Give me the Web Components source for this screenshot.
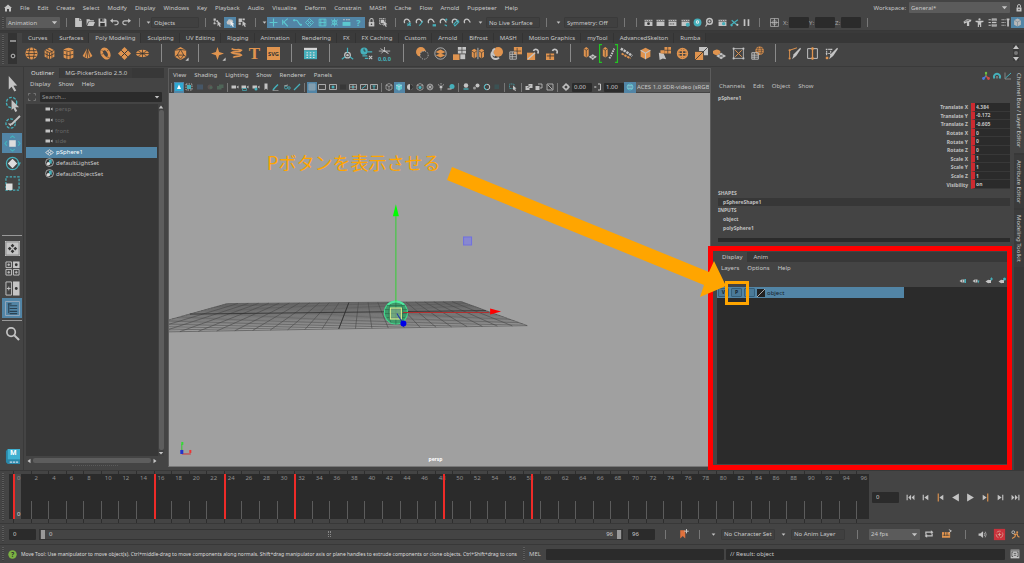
<!DOCTYPE html>
<html lang="en">
<head>
<meta charset="utf-8">
<title>Maya</title>
<style>
html,body{margin:0;height:100%;background:#444}
body{font:6px/8px "Noto Sans","Noto Sans CJK JP",sans-serif;color:#c8c8c8;overflow:hidden}
</style>
</head>
<body>
<maya-app></maya-app>
<script>
const G='#c4c4c4',O='#e0944f',T='#45b0bb',D='#333';
const s=(d,c=G,w=1.6,x='')=>`<path d="${d}" fill="none" stroke="${c}" stroke-width="${w}" ${x}/>`;
const f=(d,c=G)=>`<path d="${d}" fill="${c}"/>`;
const c=(x,y,r,k=G)=>`<circle cx="${x}" cy="${y}" r="${r}" fill="${k}"/>`;
const ring=(x,y,r,k=G,w=1.6,e='')=>`<circle cx="${x}" cy="${y}" r="${r}" fill="none" stroke="${k}" stroke-width="${w}" ${e}/>`;
const txt=(t,y,size,k,fam='Noto Sans')=>`<text x="8" y="${y}" text-anchor="middle" font-family="${fam}" font-weight="bold" font-size="${size}" fill="${k}">${t}</text>`;
const cursor='M8 5l7 6-3 .5 2 3.500-2 1-2-3.500-2 2z';
const magnet=(t,k=T)=>s('M3 9A4.500 4.500 0 1 1 11 5l2 3',G,2.4)+s(t,k,2);
const clap=x=>f('M1 3h14v3H1zM1 7h14v7H1z')+s('M3 3l2 3M7 3l2 3M11 3l2 3',D,1)+x;
const cam=f('M1 5h9v6H1zM11 8l4-3v6z');
const pen=f('M15 1L7 9l-2 6 5-4 6-9z');
const globe=ring(8,8,6,O,2)+s('M2 8h12M8 2v12M4 4.500h8M4 11.500h8',O,1.4)+s('M5 3C3 7 3 9 5 13M11 3c2 4 2 6 0 10',O,1.2);
const ball=c(8,8,7.500,O)+s('M1 8h14M2 4.500h12M2 11.500h12M6 1q-3 7 0 14M10 1q3 7 0 14',D,.9);
const cubeO=f('M8 1l6 3v8l-6 3-6-3V4z',O)+s('M2 4l6 3 6-3M8 7v8M5 2.500l6 3M5 5.500v8M11 5.500v8M2 8l6 3 6-3',D,.9);
const cubeS=f('M8 1l6 3v8l-6 3-6-3V4z',O)+s('M2 4l6 3.500L14 4M8 7.500V15',G,1.3);
const cyl=(x)=>f(`M${x} 2l3-2 3 2v9l-3 2-3-2z`,O)+s(`M${x} 2l3 2 3-2M${x+3} 4v8`,D,.8);
const plane=f('M7 12l5-3 5 3-5 4z')+s('M9.500 10.500l5 4M14.500 10.500l-5 4',D,.6);
const ICONS={
home:f('M8 1L0 8h2v7h4v-5h4v5h4V8h2z'),
lock:f('M3 7h10v8H3z')+s('M5 7V4a3 3 0 0 1 6 0v3',G,1.8)+c(8,11,1.4,D),
file:f('M2 0h7v5h5v11H2zM10 0l4 4h-4z'),
open:f('M1 2h5l2 2h6v2H4l-3 7zM5 7h11l-3 7H2z'),
save:f('M1 1h12l2 2v12H1z')+f('M4 1h7v5H4zM4 9h8v6H4z',D)+f('M8 2h2v3H8z'),
undo:s('M3 5h8a3.500 3.500 0 0 1 0 7H8',G,2)+f('M5 1v8L0 5z'),
redo:s('M13 5H5a3.500 3.500 0 0 0 0 7h3',G,2)+f('M11 1v8l5-4z'),
selh:f('M1 1h4v4H1zM1 8h3v3H1zM6 4h3v3H6z')+s('M3 5v5h3',G,1)+f(cursor),
selo:f('M1 7l4-5 6 1 2 3-6 6-5-1z')+f(cursor,'#eee'),
selc:f('M1 1h6v6H1zM8 1h4v3H8zM1 8h4v4H1z')+f(cursor),
m1:s('M8 1v14M1 8h14','#5cc8d0',2),
m2:s('M12 1L5 7l7 8M3 3v9','#5cc8d0',2),
m3:s('M1 4h5c4 0 3 9 9 8','#5cc8d0',2)+c(2,4,2,'#5cc8d0')+c(14,12,2,'#5cc8d0'),
m4:s('M8 1l7 7-7 7-7-7zM4.500 4.500l7 7M11.500 4.500l-7 7','#5cc8d0',1.6),
m5:s('M2 2h12v12H2zM5 2v12M11 2v12M2 8h12','#5cc8d0',1.6),
m6:s('M2 3l12 10M14 3L2 13M8 1v14','#5cc8d0',1.5)+ring(8,8,4,'#5cc8d0'),
m7:f('M1 7h14v7H1z','#5cc8d0')+s('M2 3h3M7 3h3M11 3h3',G,2),
m8:txt('?',14,16,'#5cc8d0'),
selbox:s('M1 1h10v10H1z',G,1.6,'stroke-dasharray="2 1"')+f('M3 3h6v6H3z')+f(cursor),
g1:magnet('M7 10l7 4M8 14l5-5M10 8l4 3'),g2:magnet('M7 13c4 0 3-4 7-8'),g3:magnet('M11 12h4v2h-4z'),g4:magnet('M11 3h4M13 1v4M10 12l4 2'),g5:magnet('M5 11l7-7 2 3-7 7z'),g6:magnet('M0 0'),
r1:clap(c(8,10,2.500,D)),r2:clap(''),r3:clap(s('M4 9v3M7 9v3M10 9v3',D,1)),r4:clap(c(12,12,3.500,T)),
r5:c(8,8,7,T)+c(8,7,3,'#eee')+c(8,7,1.4,T),
r6:ring(8,6,5,G,2.500)+c(8,6,2)+s('M4 10l-3 5',G,2),
r7:clap(c(10,10,3,T)),r8:s('M1 13L14 3M3 4l9 8',T,2)+c(3,13,2,T)+c(13,12,2,G),
pause:f('M3 2h3v12H3zM10 2h3v12h-3z'),
xf:s('M1 1h14v14H1zM8 1v14M1 8h14',G,1.2)+s('M5 5h6v6H5z',G,1),
w1:f('M1 6l6-4 8 1-1 3-3 1v7H7V8L2 10z')+s('M3 6l8-2',D,1),
w2:c(8,2.500,2)+f('M1 5h14v2l-4 1v8H9v-4H7v4H5V8L1 7z'),
w3:s('M1 3h4M1 8h4M1 13h4M7 3h8M7 8h8M7 13h8',G,1.8)+s('M7 1h8v4H7zM7 11h8v4H7z',G,1),
w4:s('M1 3h7M1 8h7M1 13h7',G,1.8,'stroke-dasharray="2 1"')+f('M10 1h5v3h-1v11h-3V4h-1z'),
w5:f('M8 1l6 3v8l-6 3-6-3V4z','#b9b9b9')+s('M2 4l6 3 6-3M8 7v8','#6a7f8c',1),
sph:ball,wheel:globe,cube:cubeO,
cyl:f('M2 3q6-4 12 0v10q-6 4-12 0z',O)+s('M2 4q6 3 12 0M2 9q6 3 12 0M6 6v9M10 6v9',D,.9),
cone:f('M8 1l6 10q-6 6-12 0z',O)+s('M8 1v13M8 2L5 13M8 2l3 11',D,.8),
tor:`<ellipse cx="8" cy="8" rx="4" ry="6" transform="rotate(-30 8 8)" fill="none" stroke="${O}" stroke-width="3.600"/>`+s('M3 4l3 2M9 12l4 1M3 9l3-1M10 5l2-2',D,.7),
pln:f('M8 0l8 8-8 8-8-8z',O)+s('M4 4l8 8M12 4l-8 8',D,1.2),
disc:`<ellipse cx="8" cy="8" rx="8" ry="4.500" fill="${O}"/>`+s('M0 8h16M8 3v10M3 5l10 6M13 5L3 11',D,.9),
plat:f('M8 0l7 4v8l-7 4-7-4V4z',O)+s('M8 3l4 7H4zM1 4l7-1 7 1M4 10l4 5 4-5M1 12l3-2M15 12l-3-2',D,.9)+f('M18 13v4h-4z'),
star:f('M8 0l2 6 6 2-6 2-2 6-2-6-6-2 6-2z',O)+f('M18 13v4h-4z'),
helix:s('M2 2c4 3 8 0 12 2-3 4-9 0-12 3 4 3 9 0 12 3-3 3-8 0-10 3',O,2),
tee:txt('T',15,21,O,'Liberation Serif'),
svg:f('M0 0h16v16H0z',O)+txt('SVG',11,7,D),
cal:f('M0 1h16v3H0z','#d5d5d5')+f('M0 4h16v11H0z',T)+s('M3 7h2M7 7h2M11 7h2M3 10h2M7 10h2M11 10h2M3 13h2M7 13h2M11 13h2','#ddd',1.3),
piv:ring(8,10,3.500,G,1.500)+c(8,10,1.5)+s('M8 7V1M5 12l-4 3M11 12l4 3',T,1.500),
clk:c(5,5,4.500,T)+s('M5 2v3h2',D,1)+s('M9 6h6M3 11h6M6 14h4',T,1.4)+s('M11 11l4 4M15 11l-4 4',G,1.4),
zero:s('M8 0v6M4 8l4-4 4 4M1 5h14M3 2l10 6',G,1)+txt('0,0,0',17,7,T),
b1:c(6,6,6,O)+`<circle cx="10" cy="10" r="5" fill="#444" stroke="${G}" stroke-width="1" stroke-dasharray="1.500 1.500"/>`,
b2:ring(8,8,7,G,1)+f('M2 6l6-3 6 3-6 3zM2 10l6-2 6 2-6 3z',O),
b3:f('M6 0h10v8H6z')+f('M0 9h8v7H0z',O)+f('M9 9h6v6H9z')+s('M11 0v8M6 4h10',D,.8),
b4:f('M1 4l3-2 3 2v8l-3 2-3-2zM10 4l3-2 3 2v8l-3 2-3-2z',O)+s('M8.500 1v14',G,1)+s('M1 5l3 2 3-2M4 7v7M10 5l3 2 3-2M13 7v7',D,.8),
b5:c(10,6,6,O)+s('M6 2a5 5 0 0 0 0 9M3 6a5 5 0 0 0 8 7',G,2.4),
b6:f('M6 0h10v9H6z',O)+s('M1 6h8v9H1zM4 6v9M1 9h8M1 12h8',G,1)+s('M10 1v8M6 5h9',D,.8),
b7:f('M0 7h10v9H0z',O)+s('M1 15l9-8',G,1.500)+s('M8 5a3 3 0 1 1 5 3',G,2),
b8:f('M0 8h10v8H0z',O)+s('M5 8v7M1 11h9',D,1)+s('M8 5a3 3 0 1 1 5 3',G,2),
c1:cyl(1)+plane,
c2:cyl(1)+s('M9 14l3-5 3-7',G,2.400,'stroke-dasharray="2 1"')+s('M0-3h-3v22h3M16-3h3v22h-3','#22c522',1.500),
c3:s('M1 2l5 3 5 3 4 3',G,3,'stroke-dasharray="3 1"')+s('M2 8l5 3 6 3',O,2.4,'stroke-dasharray="3 1"'),
c4:cubeS,c5:f('M8 0h8v8H8z',O)+f('M1 7l6 1 3 7-4-1-4 2z')+f('M3 4h5v4H3z',O)+s('M12 0v8M8 4h8',D,.8),
c7:f('M0 6h10v10H0z',O)+f('M5 0h11v10h-5V5H5z')+s('M0 16L10 6M10 6l6-6',D,1),
c8:f('M0 5q5-4 9 0v3q-4 4-9 0z',O)+f('M4 11l6-4 6 4-6 4z')+s('M7 9l6 4M13 9l-6 4',D,.7),
c9:s('M2 2h12v12H2z',G,1)+s('M4 4l8 8M12 4l-8 8',O,1.2)+[[2,2],[14,2],[2,14],[14,14]].map(p=>c(p[0],p[1],1.3)).join(''),
c10:`<g transform="translate(5 -1) scale(.7)">${ball}</g>`+s('M1 7h8v8H1zM4 7v8M1 10h8M1 12.500h8',G,1.1),
d1:s('M2 13V4l9-3',O,1.2)+pen+c(2,4,1.3,O)+c(2,14,1.3,O),
d2:s('M2 2h12v12H2z',G,1.200)+s('M8 1v14',O,1.6)+c(8,2,1.6,O)+c(8,14,1.6,O),
d3:s('M1 3h9M1 8h6M2 2v8M7 2v8',G,1.4,'stroke-dasharray="2 1"')+pen+f('M1 12h3v3H1z',O),
arrow:f('M4 0l9 10-4 .5 3 5-2 1-3-5-3 3z'),
lasso:ring(7,7,5.500,T,1.400,'stroke-dasharray="3 1.500"')+f('M7 4l8 8-4 0 2 4-2 1-2-4-2 2z'),
paint:ring(6,8,5,T,1.400,'stroke-dasharray="3 1.500"')+s('M16 0L7 9',G,2)+f('M8 8l-5 0 3 3z'),
move:f('M4.500 4.500h7v7h-7z','#ddd')+s('M5.500 2L8 0l2.500 2M5.500 14L8 16l2.500-2M2 5.500L0 8l2 2.500M14 5.500L16 8l-2 2.500',T,1.3),
rot:ring(8,8,6.500,T,1.300)+f('M8 3l5 5-5 5-5-5z','#ddd')+f('M13 7h4l-2 4z',T),
scale:s('M1 1h14v14H1z',T,1.3,'stroke-dasharray="2.500 1.500"')+f('M1 8h7v7H1z','#ddd'),
l1:f('M0 0h16v16H0z')+s('M1 1h14v14H1z','#888',1)+f('M8 3l2 2-2 2-2-2zM8 9l2 2-2 2-2-2zM5 6l2 2-2 2-2-2zM11 6l2 2-2 2-2-2z',D),
l2:s('M1 1h6v6H1zM9 9h6v6H9zM1 9h6v6H1zM4 2.500v3M2.500 4h3M4 10.500v3M2.500 12h3M12 10.500v3M10.500 12h3',G,1)+f('M8.500.5h7v7h-7z')+c(12,4,1.5,D),
l3:s('M1 1h6v14H1zM4 6v4M2 8h4',G,1)+f('M8.500.5h7v15h-7z')+c(12,8,1.5,D),
l4:s('M.5.5h15v15H.5z','#9ab',1)+s('M3 3h4M5 5h8M5 8h8M5 11h8M5 13.500h8M4 3v10','#2a4152',1.2),
search:ring(6.500,6.500,4.500,G,1.800)+s('M10 10l5 5',G,2.200),
maya:f('M1 2l2-2h13v16H3l-2-2z','#2a87a8')+f('M3 0h13v11H3z','#3fb0d0')+s('M5 14h9','#cde',1.500,'stroke-dasharray="2.500 .8"'),
cam:cam,mesh:s('M8 3l7 5-7 5-7-5zM4.500 5.500l7 5M11.500 5.500l-7 5','#ddd',1.5),
set:ring(8,8,7,G,1.400)+f('M7 3h5v7H7z',T)+c(6,10,3,'#ddd'),
sel4:s('M1 5V1h4M11 1h4v4M15 11v4h-4M5 15H1v-4','#888',1.4),
v1:f('M0 0h16v16H0z','#2fa9d2')+f('M8 3l4 9H4z','#fff'),
v2:s('M2 2h12v12H2z',G,1.6,'stroke-dasharray="3 2"')+f('M4 4h8v8H4z',T),
v3:f('M2 3h12v10H2z','#465666'),v4:c(8,8,5,'#59504f')+c(10,9,3,'#4f6558'),v5:f('M2 6h9v7H2zM6 3h9v7H6z','#4f6558'),
v6:cam,v7:cam+s('M3 11h8v4H3z',T,1.4),v8:cam+c(8,12,3,T),v9:f('M5 1h6v13l-3-3-3 3z'),
v10:s('M2 14l4-5 6-6',T,3)+s('M1 15h12',G,1),v11:ring(6,9,3,T)+ring(12,10,2.500,T)+s('M2 6l8-2',G,1.400),v12:s('M2 14L14 2',T,2.600),
v13:s('M2 2h12v12H2zM6 2v12M10 2v12M2 6h12M2 10h12','#bbb',1.1),
v14:s('M1 3h14v10H1z',G,1.6),v15:s('M1 3h14v10H1z',G,1.600)+c(8,8,3,T),v16:f('M2 3h12v10H2z','#383838'),
v17:s('M1 3h14v10H1zM1 8h14M8 3v10',G,1.4)+c(8,8,2,T),v18:s('M1 3h14v10H1z',G,1.6)+s('M4 11l8-6',T,2),v19:s('M1 3h14v10H1z',G,1.6)+s('M5 6h6M8 6v6',T,2),
v20:s('M8 1l6 3v8l-6 3-6-3V4zM2 4l6 3 6-3M8 7v8',G,1.2),v21:f('M8 1l6 3v8l-6 3-6-3V4z','#5cc8d0')+s('M2 4l6 3 6-3M8 7v8','#dde',1.2),
v22:c(8,8,6)+f('M8 2a6 6 0 0 1 0 12z',D),v23:s('M8 1l6 3v8l-6 3-6-3V4zM2 4l6 3 6-3',G,1.200)+c(8,9,3,T),
v24:ring(8,8,6,G,1.2)+s('M4 4l8 8M12 4l-8 8M8 2v12M2 8h12',G,1.2),
v25:c(8,8,3)+s('M8 0v3M2 3l3 2M14 3l-3 2M8 11v4',G,1.400),v26:c(10,7,5,T)+s('M1 12h8',G,2),
v27:c(8,5,4.500)+s('M3 12h10',T,2.600),v28:c(11,5,4)+c(5,10,3,'#999'),v29:ring(8,8,5.500,G,2)+s('M8 2.500a5.500 5.500 0 0 0 0 11',T,2),v30:f('M3 3h9v9H3z','#3b5254'),
v31:s('M1 2h9v9H1z',T,1.300,'stroke-dasharray="2 1"')+f(cursor),
v32:f('M1 6h8v8H1zM7 2h8v8H7z')+s('M5 10l5-5',D,1.500),v33:f('M1 6h8v8H1z')+s('M6 2h8v8h-4',G,1.6),v34:s('M2 2h12v12H2zM4 4l8 8',G,1.600),
gear:ring(8,8,4.500,G,3)+s('M8 0v3M8 13v3M0 8h3M13 8h3',G,2),gam:f('M1 6l5 2-5 2z')+s('M8 2h5v12H8',G,2),
ocio:ring(8,8,6,'#5cc8d0',1.6)+s('M3 5h10M2 8h12M3 11h10','#8ccbd4',1.500),
h1:s('M8 8V2','#6fc244',2.400)+s('M8 8L3 13','#4a7be0',2.400)+s('M8 8l5 5','#d34b44',2.400)+c(8,2,2.400,'#6fc244')+c(3,13,2.800,'#4a7be0')+c(13,13,2.800,'#d34b44'),
h2:s('M3 13A6 6 0 1 1 13 13',T,3.800)+s('M8 8v5',G,1.600),h3:s('M2 1v13h12',G,1)+s('M3 12L14 2',T,2),
k1:f('M1 8l6-4v8zM8 5h3v6H8z')+f('M11 4h3v8h-3z',T),k2:f('M1 8l6-4v8zM8 5h3v6H8z')+f('M11 7h4l-2 6z',T),k3:f('M1 9l6-4v8zM7 6h5v6H7z')+s('M13 1v6M10 4h6',T,2),k4:f('M1 9l6-4v8zM7 6h5v6H7z')+c(13,4,3,T),
p1:f('M1 3h2v10H1zM9 3v10L4 8zM15 3v10l-5-5z'),p2:f('M3 3h2v10H3zM13 3v10L6 8z'),p3:f('M3 1h2v14H3z',O)+f('M13 3v10L6 8z'),p4:f('M14 1v14L2 8z'),p5:f('M2 1v14l12-7z'),p6:f('M11 1h2v14h-2z',O)+f('M3 3v10l7-5z'),p7:f('M11 3h2v10h-2zM3 3v10l7-5z'),p8:f('M13 3h2v10h-2zM7 3v10l5-5zM1 3v10l5-5z'),
bm:f('M2 2h8v13l-4-4-4 4z','#e0713c')+s('M12 0v7M8.500 3.500h7',G,1.6),
loop:s('M3 9V5h10M13 7v4H3',G,1.900)+f('M11 2l4 3-4 3zM5 8l-4 3 4 3z'),
cache:f('M0 5h13v9H0z',O)+s('M1 10h11M4 5v6M8 5v6',D,1)+s('M11 1l4 2-4 3',G,1.500),
snd:f('M1 6h3l5-4v12l-5-4H1z')+s('M11 5q2 3 0 6M13 3q3 5 0 10',G,1.200),
auto:f('M-2-2h20v20H-2z','#c8323c')+ring(8,8,6,'#d9a090',1.400,'stroke-dasharray="8 3"')+s('M8 5v6M5 8h6','#d9a090',1.500),
run:ring(4,4,2.500,G)+c(11,4,1.800,O)+s('M5 8l6-1 1 4 3 2M8 8l-1 4-5 3',O,2),
help:c(8,8,7.500,'#7cb342')+txt('?',12.5,12,D),
script:f('M1 1h14v14H1z')+s('M5 5H3v7h2M11 5h2v7h-2M6 7h4M6 10h4M1 3h14',D,1.1),
dash:s('M0 8h16','#aaa',4),gearS:ring(8,8,5,G,2.500),
up:f('M8 4l6 8H2z'),down:f('M2 5h12l-6 7z'),left:f('M12 2v12L4 8z'),right:f('M4 2v12l8-6z'),
spin:f('M8 0l3 4H5zM8 16l3-4H5z')+c(8,8,2,'#777')
};
const base=`*{box-sizing:border-box}:host{display:block;min-width:0}
button{all:unset;display:grid;place-items:center;box-sizing:border-box}
input,select{font:inherit;color:inherit;border:0;margin:0;padding:0 4px;background:#2b2b2b;border-radius:1px;min-width:0;appearance:none;outline:0;height:11px}
select{background:#5b5b5b;padding:0 2px}a{color:inherit;text-decoration:none}
.row{display:flex;align-items:center}.grow{flex:1}nav{display:flex;gap:8px;white-space:nowrap}
.w6{width:6px}.w12{width:12px}.w20{width:20px}.w27{width:27px}.w54{width:54px}.pick{position:relative;display:flex}.pick select{width:100%}.pick ma-icon{position:absolute;right:2px;top:2px;--s:7px}`;
function define(tag,css,html,setup){
  customElements.define(tag,class extends HTMLElement{
    connectedCallback(){
      if(this.shadowRoot)return;
      const t=document.createElement('template');
      t.innerHTML=`<style>${base}${css}</style>${typeof html==='function'?html(this):html}`;
      this.attachShadow({mode:'open'}).append(t.content.cloneNode(true));
      if(setup)setup(this,this.shadowRoot);
    }
  });
}
define('ma-icon',`:host{display:block;width:var(--s,10px);height:var(--s,10px);flex:none}svg{display:block;overflow:visible}`,
  e=>`<svg viewBox="0 0 16 16" width="100%" height="100%" aria-hidden="true">${ICONS[e.getAttribute('name')]||''}</svg>`);
/* A run of tool buttons sharing one width; "*" marks an active tool, "|" a divider. */
define('ma-strip',`:host{flex:none;align-self:stretch}div{display:flex;align-items:center;height:100%}
button{flex:1 1 0;min-width:0;height:100%;max-height:var(--cell,11px)}.on{background:#5285a6}i{flex:1 1 0;display:grid;place-items:center}i::after{content:"";width:1px;height:var(--bar,18px);background:#8a8a8a}`,
  e=>`<div>${e.getAttribute('items').split(' ').map(n=>n==='|'?'<i></i>':`<button class="${n.endsWith('*')?'on':''}" aria-label="${n.replace('*','')}"><ma-icon name="${n.replace('*','')}"></ma-icon></button>`).join('')}</div>`);
define('ma-sep',`:host{display:grid;place-items:center;width:12px;flex:none}i{width:1px;height:9px;background:#777}`,'<i></i>');
define('ma-grip',`:host{width:6px;flex:none;align-self:stretch;padding:2px}i{display:block;height:100%;width:2px;background:repeating-linear-gradient(#5c5c5c 0 1px,#3c3c3c 1px 2px)}`,'<i></i>');
const menu=a=>`<nav>${a.split(',').map(x=>`<a href="#">${x}</a>`).join('')}</nav>`;
const pick=(w,l,v)=>`<span class="pick" style="width:${w}px"><select aria-label="${l}"><option>${v}</option></select><ma-icon name="down"></ma-icon></span>`;

define('ma-menubar',`:host{height:15px}.row{height:100%;padding:0 1px 0 4px;gap:8px}ma-icon{--s:8px}label{margin-right:-5px}.pick{margin-right:-3px}`,
`<div class="row"><ma-icon name="home"></ma-icon>${menu('File,Edit,Create,Select,Modify,Display,Windows,Key,Playback,Audio,Visualize,Deform,Constrain,MASH,Cache,Flow,Arnold,Puppeteer,Help')}<span class="grow"></span><label>Workspace:</label>${pick(101,'Workspace','General*')}<ma-icon name="lock"></ma-icon></div>`);
define('ma-status',`:host{height:16px;border-bottom:1px solid #383838}.row{height:15px}.row ma-icon{--s:5px}.pick ma-icon{--s:7px}ma-strip{--s:9px}input.v{background:#404040;border:1px solid #3a3a3a;padding:0 0 0 2px}.ar{display:grid;place-items:center;flex:none}.xyz{text-align:right;padding-right:1px;color:#aaa}label{flex:none}input,.pick{flex:none}`,
`<div class="row"><ma-grip></ma-grip>${pick(54,'Menu set','Animation')}<ma-sep></ma-sep><ma-strip items="file open save undo redo" style="width:61px"></ma-strip><ma-sep></ma-sep><span class="ar w6"><ma-icon name="down"></ma-icon></span>
<input class="v" style="width:48px" value="Objects" aria-label="Selection mask"><ma-sep></ma-sep><ma-strip items="selh selo* selc" style="width:38px"></ma-strip><ma-sep></ma-sep><span class="ar w6"><ma-icon name="down"></ma-icon></span>
<ma-strip items="m1* m2* m3* m4* m5* m6* m7* m8*" style="width:98px"></ma-strip><ma-strip items="lock selbox" style="width:24px"></ma-strip><ma-sep></ma-sep><ma-strip items="g1 g2 g3 g4 g5 g6" style="width:73px"></ma-strip><span class="ar w12"><ma-icon name="down"></ma-icon></span>
<input class="v w54" value="No Live Surface" aria-label="Live surface"><ma-sep></ma-sep><span class="ar w12"><ma-icon name="down"></ma-icon></span><input class="v w54" value="Symmetry: Off" aria-label="Symmetry"><ma-sep></ma-sep><ma-sep></ma-sep>
<ma-strip items="r1 r2 r3 r4 r5 r6 r7 r8 pause" style="width:111px"></ma-strip><ma-sep></ma-sep><ma-strip items="xf" style="width:18px"></ma-strip>
<label class="xyz w6" for="x">X:</label><input id="x" class="w20"><label class="xyz w6" for="y">Y:</label><input id="y" class="w20"><label class="xyz w6" for="z">Z:</label><input id="z" class="w20"><ma-sep></ma-sep><span class="grow"></span><ma-strip items="w1 w2 w3 w4 w5*" style="width:63px"></ma-strip></div>`);
define('ma-shelf',`:host{height:34px;background:#444;border-bottom:1px solid #3a3a3a;display:flex}
.side{width:9px;background:#333;display:flex;flex-direction:column;justify-content:space-around;align-items:center;margin:0 5px 2px 2px;--s:6px}.main{flex:1;min-width:0}
.tabs{display:flex;height:10px;background:#373737}.tabs button{padding:0 6px;box-shadow:inset -1px 0 #333;background:#3b3b3b;white-space:nowrap}.tabs .on{background:#444}
.body{display:flex;height:20px;justify-content:space-between;--s:13px;--cell:18px;align-items:center}.body>ma-strip{width:819px}.spin{width:16px;--s:16px;background:linear-gradient(#393939,#393939) center/6px no-repeat}`,
`<ma-grip></ma-grip><div class="side"><ma-icon name="dash"></ma-icon><ma-icon name="gearS"></ma-icon></div><div class="main"><div class="tabs" role="tablist">${'Curves,Surfaces,Poly Modeling,Sculpting,UV Editing,Rigging,Animation,Rendering,FX,FX Caching,Custom,Arnold,Bifrost,MASH,Motion Graphics,myTool,AdvancedSkelton,Rumba'.split(',').map((t,i)=>`<button role="tab" class="${i===2?'on':''}">${t}</button>`).join('')}</div>
<div class="body"><ma-strip items="sph cube cyl cone tor pln disc | plat | star helix tee svg | cal | piv clk zero | b1 b2 b3 b4 b5 b6 b7 b8 | c1 c2 c3 c4 c5 wheel c7 c8 c9 c10 | d1 d2 d3"></ma-strip><button class="spin" aria-label="Scroll shelf"><ma-icon name="spin"></ma-icon></button></div></div>`);
define('ma-toolbox',`:host{width:24px;flex:none;padding:6px 2px 4px;display:flex;flex-direction:column;border-right:1px solid #3a3a3a;--s:15px}button{height:20px;width:20px;flex:none}.on{background:#5285a6}hr{border:0;height:1px;width:20px;background:#999;margin:2px 0;flex:none}.gap{height:40px}.m{position:relative;font:bold 7px/7px "Noto Sans",sans-serif;color:#fff}.m span{position:absolute;top:3px;left:8px}`,
`${['arrow','lasso','paint','move*','rot','scale'].map(n=>`<button class="${n.endsWith('*')?'on':''}" aria-label="${n}"><ma-icon name="${n.replace('*','')}"></ma-icon></button>`).join('')}<div class="gap"></div><hr>${['l1','l2','l3','l4*'].map(n=>`<button class="${n.endsWith('*')?'on':''}" aria-label="${n}"><ma-icon name="${n.replace('*','')}"></ma-icon></button>`).join('')}<hr><button aria-label="Search"><ma-icon name="search"></ma-icon></button><span class="grow"></span><button class="m" aria-label="Maya"><ma-icon name="maya"></ma-icon><span>M</span></button>`);
const rows=[['cam','persp','dim'],['cam','top','dim'],['cam','front','dim'],['cam','side','dim'],['mesh','pSphere1','on'],['set','defaultLightSet',''],['set','defaultObjectSet','']];
define('ma-outliner',`:host{width:138px;flex:none;display:flex;flex-direction:column;margin:1px 4px 0 2px}
.tabs{display:flex;gap:1px;height:10px;background:#383838}.tabs button{padding:0 5px;background:#3b3b3b}.tabs .on{background:#444;color:#ddd}
nav{padding:2px 4px;height:13px}.find{gap:4px;padding:0 2px;height:12px;--s:8px}.find span{flex:1;position:relative}.find input{width:100%;display:block;height:10px;padding:0 2px}.find input::placeholder{color:#999}.find span ma-icon{position:absolute;right:2px;top:2px;--s:6px}
.mid{flex:1;display:flex;background:#373737;margin-top:1px}ul{margin:0;padding:0;list-style:none;flex:1;display:grid;grid-template-rows:repeat(7,1fr);height:75px}li{display:flex;align-items:center;gap:2px;padding-left:19px;--s:9px}.dim{color:#666}.dim ma-icon{--s:8px}.on{background:#5285a6;color:#fff}
.vs{width:6px;margin-left:1px;display:flex;flex-direction:column;align-items:center;--s:6px;background:#404040}.vs b{flex:1;width:5px;background:#5d5d5d;border-radius:2px}
.hs{height:9px;display:flex;align-items:center;gap:1px;padding-right:6px;--s:6px}.hs b{flex:1;height:5px;background:#5d5d5d;border-radius:2px}.dots{height:5px;width:46px;margin:0 auto;border-top:1px dotted #5a5a5a}`,
`<div class="tabs" role="tablist"><button class="on" role="tab">Outliner</button><button role="tab">MG-PickerStudio 2.5.0</button></div>${menu('Display,Show,Help')}<div class="find row"><ma-icon name="sel4"></ma-icon><span><input placeholder="Search..." aria-label="Search"><ma-icon name="down"></ma-icon></span></div>
<div class="mid"><ul>${rows.map(r=>`<li class="${r[2]}"><ma-icon name="${r[0]}"></ma-icon>${r[1]}</li>`).join('')}</ul><div class="vs"><ma-icon name="up"></ma-icon><b></b><ma-icon name="down"></ma-icon></div></div><div class="hs"><ma-icon name="left"></ma-icon><b></b><ma-icon name="right"></ma-icon></div><div class="dots"></div>`);
/* Ground grid: a unit square of 24 divisions mapped on its four projected corners. */
function grid(){
  const [p0,p1,p2,p3]=[[228,303],[461,301],[527,325],[124,332]];
  const dx1=p1[0]-p2[0],dx2=p3[0]-p2[0],dx3=p0[0]-p1[0]+p2[0]-p3[0],dy1=p1[1]-p2[1],dy2=p3[1]-p2[1],dy3=p0[1]-p1[1]+p2[1]-p3[1];
  const k=dx1*dy2-dx2*dy1,g=(dx3*dy2-dx2*dy3)/k,h=(dx1*dy3-dx3*dy1)/k;
  const at=(u,v)=>{const w=g*u+h*v+1;return [((p1[0]-p0[0]+g*p1[0])*u+(p3[0]-p0[0]+h*p3[0])*v+p0[0])/w,((p1[1]-p0[1]+g*p1[1])*u+(p3[1]-p0[1]+h*p3[1])*v+p0[1])/w].map(n=>n.toFixed(1)).join(' ')};
  let d='';for(let i=0;i<=24;i++)d+=`M${at(i/24,0)}L${at(i/24,1)}M${at(0,i/24)}L${at(1,i/24)}`;
  return `<path d="${d}" fill="none" stroke="#484848" stroke-width=".6"/><path d="M${at(.5,0)}L${at(.5,1)}M${at(0,.5)}L${at(1,.5)}" fill="none" stroke="#303030" stroke-width=".8"/>`;
}
define('ma-viewport',`:host{flex:1;display:flex;flex-direction:column;border:1px solid #5c5c5c;border-bottom-color:#777;margin:1px 0 3px;position:relative;overflow:hidden}
nav{padding:2px 4px 0;height:12px}.tools{height:12px;--s:8px}.tools ma-sep{width:5px}.tools input{padding:0 2px;height:9px;flex:none}.tools .pick{flex:1}.tools select{height:10px;padding:0 1px;text-overflow:clip}
.scene{flex:1;min-height:0;background:#a0a0a0;position:relative}svg{width:100%;height:100%;display:block;position:absolute}.cam{position:absolute;bottom:3px;left:0;width:100%;text-align:center;color:#fff;font-weight:bold;font-size:5px;padding-right:8px}
.note{position:absolute;left:98px;top:56px;font:400 18px/26px "Noto Sans CJK JP",sans-serif;color:#ffa500;white-space:nowrap}`,
`${menu('View,Shading,Lighting,Show,Renderer,Panels')}<div class="tools row"><ma-sep></ma-sep><ma-strip items="v1* v2 v3 v4 v5" style="width:51px"></ma-strip><ma-sep></ma-sep><ma-strip items="v6 v7 v8 v9 v10 v11 v12" style="width:72px"></ma-strip><ma-sep></ma-sep><ma-strip items="v13* v14 v15 v16 v17 v18 v19" style="width:72px"></ma-strip><ma-sep></ma-sep><ma-strip items="v20 v21* v22 v23 v24 v25 v26" style="width:72px"></ma-strip><ma-sep></ma-sep><ma-strip items="v27 v28 v29 v30" style="width:41px"></ma-strip><ma-sep></ma-sep><ma-strip items="v31" style="width:12px"></ma-strip><ma-sep></ma-sep><ma-strip items="v32 v33 v34" style="width:31px"></ma-strip><ma-sep></ma-sep><ma-strip items="gear" style="width:12px"></ma-strip><input class="w20" value="0.00" aria-label="Exposure"><ma-strip items="gam" style="width:12px"></ma-strip><input class="w20" value="1.00" aria-label="Gamma"><ma-strip items="ocio*" style="width:12px"></ma-strip><span class="pick"><select aria-label="View transform"><option>ACES 1.0 SDR-video (sRGB)</option></select></span></div>
<div class="scene"><svg viewBox="169 93 541 372" preserveAspectRatio="xMidYMid slice">${grid()}
<circle cx="396" cy="312" r="11.500" fill="#3f9b6b" stroke="#3fe090"/><path d="M385 309h22M385 313h22M387 317h18M387 305h18M396 301v23M391 302q-4 10 0 20M401 302q4 10 0 20" fill="none" stroke="#2c6b4c" stroke-width=".7"/><path d="M388 304q8-6 16 0" stroke="#4fe8a0" fill="none" stroke-width="2"/>
<path d="M396 301V216" stroke="#35cf35"/><path d="M396 204l-3 12h6z" fill="#0f0"/><path d="M403 312h86" stroke="#b03030"/><path d="M501 311l-11-3v6z" fill="#f00"/><path d="M390.500 307.500h11v11h-11z" fill="#8fae8a" fill-opacity=".6" stroke="#e2ef8f"/><path d="M397 313l5 8" stroke="#23a"/><circle cx="403.500" cy="323" r="3" fill="#0000e8"/>
<path d="M463.500 236.500h8v8h-8z" fill="#8888d0" stroke="#7070e0"/><path d="M182.500 453v-10" stroke="#3c3"/><path d="M182.500 453h9" stroke="#c33"/><path d="M181 449h3v4h-3z" fill="#23c"/><path d="M190 449h2v3h-2z" fill="#e33"/><path d="M182 441h2v3h-2z" fill="#3d3"/></svg><span class="cam">persp</span><span class="note">Pボタンを表示させる</span></div>`);
const attrs=[['Translate X','4.384'],['Translate Y','-0.172'],['Translate Z','-0.605'],['Rotate X','0'],['Rotate Y','0'],['Rotate Z','0'],['Scale X','1'],['Scale Y','1'],['Scale Z','1'],['Visibility','on']];
define('ma-channels',`:host{padding:4px 4px 0 7px;height:177px;display:flex;flex-direction:column;font-size:5px;font-weight:bold;flex:none;color:#c0c0c0}
.head{height:9px;--s:8px;margin-right:-3px;justify-content:flex-end}nav{font-size:6px;font-weight:normal;padding:2px 1px 0;height:14px}h4{margin:0;font:inherit;height:9px;line-height:9px}
.a{display:grid;grid-template-rows:repeat(10,1fr);height:86px}.a div{display:flex;align-items:center;justify-content:flex-end;gap:3px;min-height:0}.a input{width:39px;height:100%;border-left:4px solid #cc2a30;padding:0 1px;border-radius:0;border-bottom:1px solid #383838}.in{padding-left:5px}.bar{background:#373737}.track{height:4px;background:#2b2b2b;margin:auto 0 2px}.g{display:grid;grid-template-rows:repeat(5,1fr);height:43px}.g>*{height:auto}`,
`<div class="head row"><ma-strip items="h1 h2 h3" style="width:33px"></ma-strip></div>${menu('Channels,Edit,Object,Show')}<h4>pSphere1</h4><div class="a">${attrs.map((a,i)=>`<div><label for="a${i}">${a[0]}</label><input id="a${i}" value="${a[1]}"></div>`).join('')}</div><div class="g"><h4>SHAPES</h4><div class="in bar">pSphereShape1</div><h4>INPUTS</h4><div class="in">object</div><div class="in">polySphere1</div></div><div class="track"></div>`);
define('ma-layers',`:host{flex:1;display:flex;flex-direction:column;position:relative;padding:6px 6px 6px;margin-top:2px}
.tabs{display:flex;gap:1px;height:10px;background:#383838}.tabs button{padding:0 5px}.tabs .on{background:#444}nav{padding:2px 4px;height:13px}.icons{height:12px;justify-content:flex-end;--s:8px}
.list{flex:1;background:#2b2b2b}.layer{height:11px;width:187px;background:#5285a6;display:flex;align-items:center;color:#16222b;gap:2px;padding-left:1px;--s:8px}.layer button{width:11px;height:9px;background:#4b7a98;border:1px solid #35607c;border-radius:1px;font-size:5px;line-height:7px;font-weight:bold}.sw{width:8px;height:8px;background:linear-gradient(135deg,#222 46%,#aaa 46% 54%,#222 54%)}
.frame{position:absolute;inset:0 2px 0 -3px;border:5px solid #f00;pointer-events:none}`,
`<div class="tabs" role="tablist"><button class="on" role="tab">Display</button><button role="tab">Anim</button></div>${menu('Layers,Options,Help')}<div class="icons row"><ma-strip items="k1 k2 k3 k4" style="width:52px"></ma-strip></div><div class="list"><div class="layer"><button>V</button><button>P</button><button aria-label="Display type"></button><span class="sw"></span><span>object</span></div></div><div class="frame"></div>`);
define('ma-sidetabs',`:host{width:10px;flex:none;display:flex;flex-direction:column;gap:2px;background:#383838;margin-top:1px}button{writing-mode:vertical-rl;width:10px;background:#3b3b3b;padding:5px 1px}.on{background:#444}`,
`<button class="on">Channel Box / Layer Editor</button><button>Attribute Editor</button><button>Modeling Toolkit</button>`);
const keys={0:0,8:0,12:0,16:0,24:50,29:50};
define('ma-timeline',`:host{height:53px;display:flex;flex:none;border-top:1px solid #383838}.wrap{flex:1;min-width:0;margin:0 3px 0 1px;overflow:hidden;padding:3px 0 5px;background:#444}
.area{background:#2b2b2b;height:45px;padding-left:4px;margin-left:2px}.cells{display:grid;grid-template-columns:repeat(49,1fr);height:100%;margin-right:-5px}.cells div{position:relative;padding-left:4px;color:#909090;background:linear-gradient(#5c5c5c,#5c5c5c) 0 27px/1px 18px no-repeat}
.cells div::before,.cells div::after{content:"";position:absolute;left:0;width:1px;height:4px;background:#2e2e2e}.cells div::before{bottom:100%}.cells div::after{top:100%}
.cells div:first-child{background:linear-gradient(#4c4c4c,#4c4c4c) 0 0/8px 100% no-repeat}.cells b{position:absolute;top:0;height:100%;width:2px;background:#ee2b28}.cells i{position:absolute;left:4px;bottom:1px;font-style:normal;color:#ddd}.play{width:152px;flex:none;display:flex;align-items:center;justify-content:space-between;padding-right:1px;--s:9px}`,
`<ma-grip></ma-grip><div class="wrap"><div class="area"><div class="cells">${Array.from({length:49},(_,i)=>`<div>${i*2}${i in keys?`<b style="left:${keys[i]}%"></b>`:''}${i?'':'<i>0</i>'}</div>`).join('')}</div></div></div><div class="play"><input class="w27" value="0" aria-label="Current time"><ma-strip items="p1 p2 p3 p4 p5 p6 p7 p8" style="width:120px"></ma-strip></div>`);
define('ma-range',`:host{height:21px;flex:none;border-top:1px solid #383838}.row{height:100%}.track{flex:1;margin:0 5px 0 3px;height:11px;border:1px solid #333;background:#444;display:flex;align-items:center;justify-content:space-between;padding:0 1px}.track span{display:flex;align-items:center;gap:4px}.track b{width:4px;height:9px;background:#999}.track i{width:3px;height:6px;border-left:1px dotted #888;border-right:1px dotted #888}
input,.pick,ma-sep{flex:none}.v{background:#404040;border:1px solid #3a3a3a;width:54px;padding:0 0 0 2px}.ar{width:16px;display:grid;place-items:center;--s:5px}.first{margin-left:3px}`,
`<div class="row"><ma-grip></ma-grip><input class="w27 first" value="0" aria-label="Start time"><div class="track"><span><b></b>0</span><i></i><span>96<b></b></span></div><input class="w27" value="96" aria-label="End time"><ma-sep style="width:20px"></ma-sep><ma-strip items="bm" style="width:18px"></ma-strip><ma-sep></ma-sep><span class="ar"><ma-icon name="down"></ma-icon></span><input class="v" value="No Character Set" aria-label="Character set"><span class="ar"><ma-icon name="down"></ma-icon></span><input class="v" value="No Anim Layer" aria-label="Animation layer"><ma-sep style="width:24px"></ma-sep>${pick(51,'Frame rate','24 fps')}<ma-strip items="loop cache" style="width:36px"></ma-strip><ma-sep style="width:18px"></ma-sep><ma-strip items="snd auto run" style="width:50px;--s:9px"></ma-strip></div>`);
define('ma-command',`:host{height:19px;flex:none;border-top:1px solid #383838}.row{height:100%}.help{flex:1;min-width:0;overflow:hidden;white-space:nowrap;font-size:5px;color:#ddd;margin-left:4px}label{margin:0 5px 0 2px}.cmd{width:178px}.out{width:279px;margin-left:2px}input{flex:none}.row>ma-icon:first-of-type{margin-left:2px;--s:9px}`,
`<div class="row"><ma-grip></ma-grip><ma-icon name="help"></ma-icon><span class="help">Move Tool: Use manipulator to move object(s). Ctrl+middle-drag to move components along normals. Shift+drag manipulator axis or plane handles to extrude components or clone objects. Ctrl+Shift+drag to cons</span><ma-grip></ma-grip><label for="mel">MEL</label><input id="mel" class="cmd"><input class="out" value="// Result: object" aria-label="Result"><ma-strip items="script" style="width:19px"></ma-strip></div>`);
define('maya-app',`:host{display:flex;flex-direction:column;height:100vh;position:relative;overflow:hidden}ma-menubar,ma-status,ma-shelf{flex:none}.gap{height:2px;flex:none;background:#3a3a3a}main{flex:1;display:flex;min-height:0}.right{width:303px;flex:none;display:flex;flex-direction:column}
.arrow{position:absolute;right:275px;top:165px;width:303px;height:142px;overflow:visible;pointer-events:none}`,
`<ma-menubar></ma-menubar><ma-status></ma-status><div class="gap"></div><ma-shelf></ma-shelf><main><ma-toolbox></ma-toolbox><ma-outliner></ma-outliner><ma-viewport></ma-viewport><div class="right"><ma-channels></ma-channels><ma-layers></ma-layers></div><ma-sidetabs></ma-sidetabs></main><ma-timeline></ma-timeline><ma-range></ma-range><ma-command></ma-command>
<svg class="arrow" viewBox="446 165 303 142" aria-hidden="true"><path d="M452 167L709 272L714 261L726 286L700 297L704 285L447 180z" fill="#ffa500"/><path d="M726.500 282.500h21v21h-21z" fill="none" stroke="#ffa500" stroke-width="3"/></svg>`);
</script>
</body>
</html>
